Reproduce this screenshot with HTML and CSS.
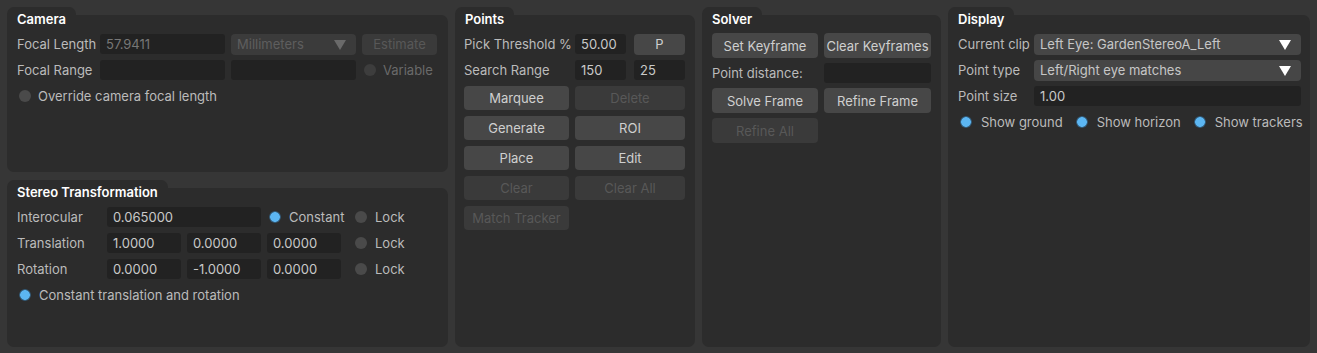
FILE: index.html
```html
<!DOCTYPE html>
<html>
<head>
    <meta charset="UTF-8" />
    <link rel="stylesheet" href="styles.css">
</head>
<body>
<div class="layout">

    <div class="column">
        <div class="panel camera">
            <div class="tab">Camera</div>
            <div class="body">
                <div class="row">
                    <span class="label cam-label">Focal Length</span>
                    <div class="field dim w125">57.9411</div>
                    <div class="combo off w125">Millimeters<span class="arrow"></span></div>
                    <button class="btn off w75">Estimate</button>
                </div>
                <div class="row">
                    <span class="label cam-label">Focal Range</span>
                    <div class="field w125"></div>
                    <div class="field w125"></div>
                    <span class="radio off-radio gap7"></span><span class="label faint">Variable</span>
                </div>
                <div class="row">
                    <span class="radio"></span><span class="label">Override camera focal length</span>
                </div>
            </div>
        </div>

        <div class="panel stereo">
            <div class="tab">Stereo Transformation</div>
            <div class="body stereo-grid">
                <span class="label">Interocular</span>
                <div class="field span2">0.065000</div>
                <div class="opt"><span class="radio on"></span><span class="label">Constant</span></div>
                <div class="opt lock"><span class="radio"></span><span class="label">Lock</span></div>

                <span class="label">Translation</span>
                <div class="field">1.0000</div>
                <div class="field">0.0000</div>
                <div class="field">0.0000</div>
                <div class="opt lock"><span class="radio"></span><span class="label">Lock</span></div>

                <span class="label">Rotation</span>
                <div class="field">0.0000</div>
                <div class="field">-1.0000</div>
                <div class="field">0.0000</div>
                <div class="opt lock"><span class="radio"></span><span class="label">Lock</span></div>

                <div class="opt full"><span class="radio on"></span><span class="label">Constant translation and rotation</span></div>
            </div>
        </div>
    </div>

    <div class="panel points">
        <div class="tab">Points</div>
        <div class="body">
            <div class="row">
                <span class="label pt-label">Pick Threshold %</span>
                <div class="field w51">50.00</div>
                <button class="btn w51 ml2">P</button>
            </div>
            <div class="row">
                <span class="label pt-label">Search Range</span>
                <div class="field w51">150</div>
                <div class="field w51 ml2">25</div>
            </div>
            <div class="btn-grid">
                <button class="btn">Marquee</button>
                <button class="btn off">Delete</button>
                <button class="btn">Generate</button>
                <button class="btn">ROI</button>
                <button class="btn">Place</button>
                <button class="btn">Edit</button>
                <button class="btn off">Clear</button>
                <button class="btn off">Clear All</button>
                <button class="btn off">Match Tracker</button>
            </div>
        </div>
    </div>

    <div class="panel solver">
        <div class="tab">Solver</div>
        <div class="body solver-grid">
            <button class="btn tall">Set Keyframe</button>
            <button class="btn tall">Clear Keyframes</button>
            <span class="label">Point distance:</span>
            <div class="field"></div>
            <button class="btn tall">Solve Frame</button>
            <button class="btn tall">Refine Frame</button>
            <button class="btn tall off">Refine All</button>
        </div>
    </div>

    <div class="panel display">
        <div class="tab">Display</div>
        <div class="body">
            <div class="row">
                <span class="label disp-label">Current clip</span>
                <div class="combo grow">Left Eye: GardenStereoA_Left<span class="arrow"></span></div>
            </div>
            <div class="row">
                <span class="label disp-label">Point type</span>
                <div class="combo grow">Left/Right eye matches<span class="arrow"></span></div>
            </div>
            <div class="row">
                <span class="label disp-label">Point size</span>
                <div class="field grow">1.00</div>
            </div>
            <div class="row checks">
                <div class="opt"><span class="radio on"></span><span class="label">Show ground</span></div>
                <div class="opt"><span class="radio on"></span><span class="label">Show horizon</span></div>
                <div class="opt"><span class="radio on"></span><span class="label">Show trackers</span></div>
            </div>
        </div>
    </div>

</div>
</body>
</html>
```

FILE: styles.css
```css
html, body {
    margin: 0;
    background-color: #363636;
}

body {
    font-family: Inter, "Noto Sans", sans-serif;
    font-size: 13px;
    color: #bbbbbb;
}

.layout {
    display: flex;
    gap: 7px;
    padding: 7px 7px 6px;
    height: 353px;
    box-sizing: border-box;
}

.column {
    display: flex;
    flex-direction: column;
    gap: 8px;
    width: 441px;
}

/* panel = small rounded tab + body */
.panel {
    display: flex;
    flex-direction: column;
    min-width: 0;
}

.panel .tab {
    align-self: flex-start;
    z-index: 1; /* keep the title above the body background */
    height: 4px;
    padding: 4px 10px 0;
    background-color: #2c2c2c;
    border-radius: 7px 7px 0 0;
    color: #ffffff;
    font-weight: 600;
    line-height: 16px;
    white-space: nowrap;
}

.panel .body {
    flex: 1;
    background-color: #2c2c2c;
    border-radius: 0 7px 7px 7px;
    padding: 19px 10px 10px;
}

.camera { height: 165px; }
.stereo { flex: 1; }
.points { width: 240px; }
.points .body { padding-left: 9px; }
.solver { width: 239px; }
.display { flex: 1; }
.display .body { padding-right: 9px; }

.row {
    display: flex;
    align-items: center;
    gap: 6px;
    height: 20px;
    margin-bottom: 6px;
}

.label {
    white-space: nowrap;
    line-height: 20px;
}

.faint { color: #6a6a6a; }

.cam-label { width: 77px; }
.pt-label { width: 105px; }
.disp-label { width: 70px; }

.field {
    box-sizing: border-box;
    height: 20px;
    background-color: #222222;
    border-radius: 3px;
    padding: 0 6px;
    line-height: 20px;
    color: #c9c9c9;
    white-space: nowrap;
}

.field.dim { color: #777777; }

.combo {
    position: relative;
    box-sizing: border-box;
    height: 21px;
    background-color: #464646;
    border-radius: 4px;
    padding: 0 6px;
    line-height: 21px;
    color: #c6c6c6;
    white-space: nowrap;
}

.combo.off {
    background-color: #3b3b3b;
    color: #5e5e5e;
}

/* dropdown triangle */
.combo .arrow {
    position: absolute;
    right: 10px;
    top: 6px;
    width: 0;
    height: 0;
    border-left: 6px solid transparent;
    border-right: 6px solid transparent;
    border-top: 10px solid #ffffff;
}

.combo.off .arrow { border-top-color: #6a6a6a; }

.w125 { width: 125px; }
.w75 { width: 75px; }
.w51 { width: 51px; }
.ml2 { margin-left: 2px; }
.grow { flex: 1; min-width: 0; }
.gap7 { margin-left: 7px; }

.btn {
    font-family: inherit;
    font-size: 13px;
    height: 24px;
    border: none;
    border-radius: 4px;
    background-color: #474747;
    color: #cfcfcf;
    padding: 0;
    white-space: nowrap;
}

.btn.off {
    background-color: #3a3a3a;
    color: #585858;
}

.btn.w75 { height: 21px; }
.btn.w51 { height: 21px; }

.btn.tall { height: 25px; }

.btn-grid {
    display: grid;
    grid-template-columns: 105px 110px;
    grid-auto-rows: 24px;
    gap: 6px;
    margin-top: 6px;
}

.solver-grid {
    display: grid;
    grid-template-columns: 106px 107px;
    grid-template-rows: 25px 20px 25px 25px;
    column-gap: 6px;
    row-gap: 5px;
    align-content: start;
    padding-top: 18px !important;
}

.radio {
    display: inline-block;
    width: 12px;
    height: 12px;
    border-radius: 50%;
    background-color: #4a4a4a;
    flex: none;
    margin-left: 2px;
}

.radio.on {
    background: radial-gradient(circle, #5cb6f2 0 4.5px, #3a6e93 5px, #2d4a60 6px);
}

.radio.off-radio { background-color: #3d3d3d; }

.row .radio + .label {
    margin-left: 1px;
}

.opt {
    display: flex;
    align-items: center;
    gap: 8px;
    height: 20px;
}

.stereo-grid {
    display: grid;
    grid-template-columns: 84px 74px 74px 74px auto;
    grid-auto-rows: 20px;
    column-gap: 6px;
    row-gap: 6px;
    align-content: start;
}

.stereo-grid .span2 { grid-column: span 2; }
.stereo-grid .lock { margin-left: 6px; }
.stereo-grid .full { grid-column: 1 / -1; }

.checks {
    margin-top: 5px;
    gap: 11px;
}
```
